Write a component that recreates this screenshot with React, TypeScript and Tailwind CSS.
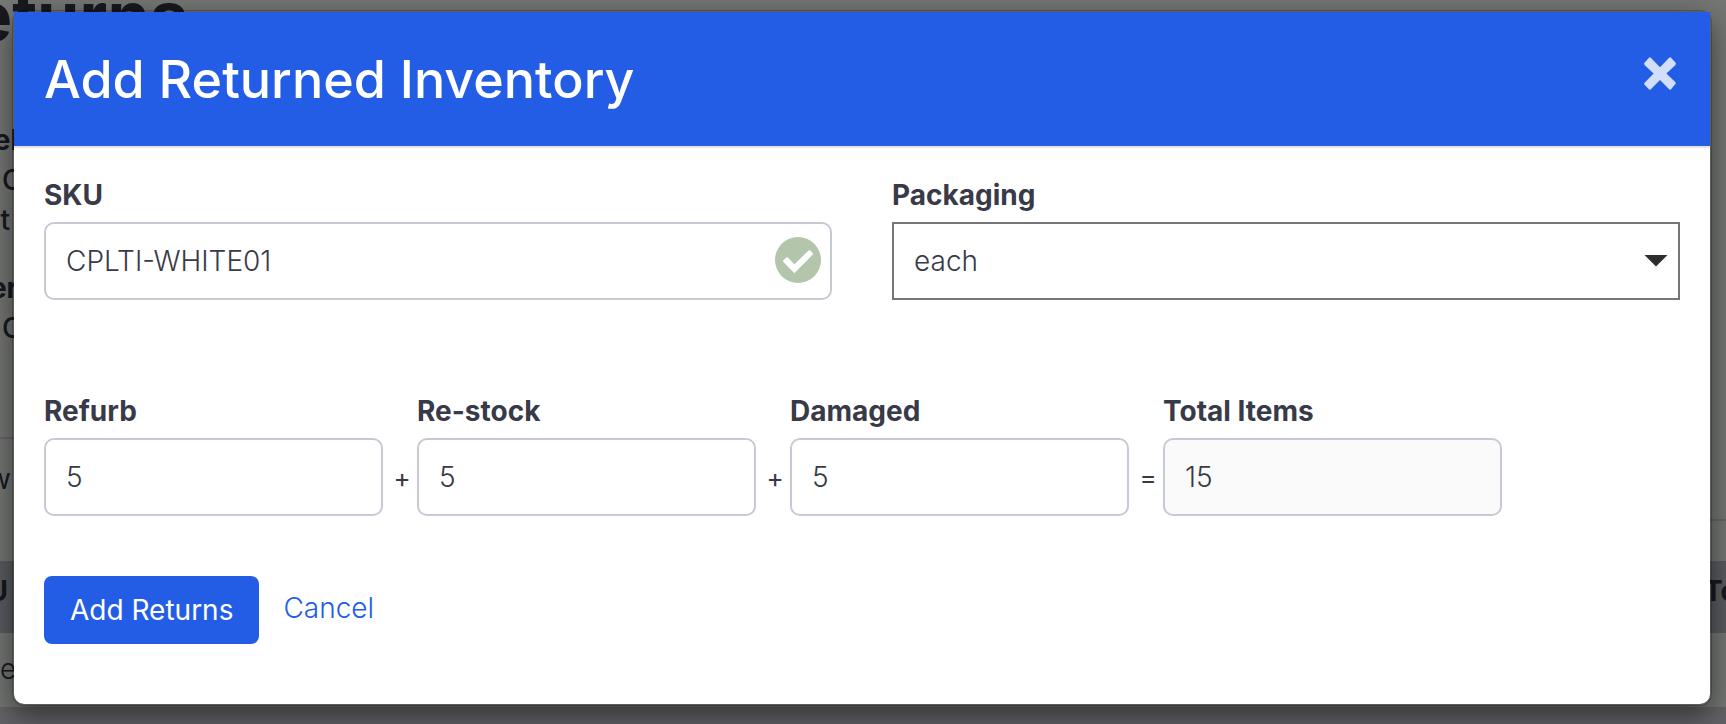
import { useState } from "react";

const fieldClass =
  "h-[78px] w-full rounded-[10px] border-2 border-[#c6cad2] px-5 text-[28px] font-light text-[#383a48] outline-none focus:border-[#235de6]";
const labelClass = "mb-2.5 block text-[28px] leading-[34px] font-bold";

function CheckIcon() {
  return (
    <svg viewBox="0 0 46 46" className="h-[46px] w-[46px]" aria-hidden="true">
      <circle cx="23" cy="23" r="23" fill="#b3c5ab" />
      <path
        d="M8.4 23.2 L11.2 20.5 Q12 19.9 12.8 20.6 L19.4 27.3 L33.6 13.5 Q34.5 12.8 35.3 13.6 L37.6 16 Q38.3 16.9 37.6 17.7 L19.4 36.2 L8.4 25 Q7.6 24.1 8.4 23.2 Z"
        fill="#fff"
      />
    </svg>
  );
}

function CloseIcon() {
  return (
    <svg viewBox="0 0 32 33" className="h-[33px] w-8" aria-hidden="true">
      <path
        d="M5.2 0.6 Q6 0 6.8 0.7 L16 10.2 L25.2 0.7 Q26 0 26.8 0.6 L31.2 5.2 Q31.9 6 31.9 7 Q31.9 7.6 31.2 8.2 L22.4 16.5 L31.2 25 Q31.9 25.7 31.8 26.6 L26.8 32.4 Q26 33 25.2 32.3 L16 23 L6.8 32.3 Q6 33 5.2 32.4 L0.6 27.8 Q0 27 0.1 26.3 L9.6 16.5 L0.8 8.2 Q0 7.4 0.1 6.2 Z"
        fill="#d3dffa"
      />
    </svg>
  );
}

function Operator({ children }: { children: string }) {
  return <span className="flex h-[78px] items-center justify-center self-end pl-1 text-[26px]">{children}</span>;
}

// Returns page underneath the dialog, dimmed by the backdrop
function ReturnsPage() {
  return (
    <div
      className="absolute inset-0 flex flex-col overflow-hidden bg-[#ebeeeb] text-[28px] leading-[40px] text-[#30323f]"
      aria-hidden="true"
    >
      <div className="-mt-6 flex h-20 w-[188px] shrink-0 justify-end text-[68px] leading-[80px] font-bold">Returns</div>
      <div className="mt-16 flex w-[18px] justify-end font-bold">Label</div>
      <div className="pl-0.5 font-medium">C</div>
      <div className="flex w-[10px] justify-end font-medium">Cost</div>
      <div className="mt-7 flex w-[18px] justify-end font-bold">Order</div>
      <div className="pl-0.5 font-medium">C</div>
      <div className="mt-[89px] flex h-[84px] shrink-0">
        <div className="flex-1 border-t-2 border-[#ccc] pt-5">
          <div className="flex w-[11px] justify-end">Show</div>
        </div>
        <div className="flex-1 border-b-2 border-[#ccc]" />
      </div>
      <div className="mt-10 flex h-[72px] shrink-0 justify-between bg-[#b7b9c2] pt-2.5 font-bold">
        <div className="flex w-2 justify-end">SKU</div>
        <div className="w-[22px]">Total</div>
      </div>
      <div className="h-[74px] shrink-0 pt-4 font-light">e</div>
      <div className="flex-1 bg-[#c6c7d0]" />
    </div>
  );
}

export default function App() {
  const [sku, setSku] = useState("CPLTI-WHITE01");
  const [refurb, setRefurb] = useState("5");
  const [restock, setRestock] = useState("5");
  const [damaged, setDamaged] = useState("5");

  const total = Number(refurb) + Number(restock) + Number(damaged);

  return (
    <div className="relative min-h-screen overflow-hidden pt-[10px] pr-[14px] pb-[18px] pl-3 font-['Inter',sans-serif] text-[#383a48]">
      <ReturnsPage />
      <div className="absolute inset-0 bg-black/50" />

      <div
        role="dialog"
        aria-labelledby="dialog-title"
        className="relative rounded-xl border-2 border-black/20 bg-white bg-clip-padding shadow-[0_10px_30px_rgba(0,0,0,0.5)]"
      >
        <header className="flex h-[136px] items-center justify-between border-b-2 border-[#e5e5e5] bg-[#235de6] px-[30px]">
          <h1 id="dialog-title" className="pt-0.5 text-[52px] leading-[64px] font-medium text-white">
            Add Returned Inventory
          </h1>
          <button type="button" aria-label="Close" className="mr-1 mb-3">
            <CloseIcon />
          </button>
        </header>

        <form className="px-[30px] pt-[30px] pb-[60px]" onSubmit={(e) => e.preventDefault()}>
          <div className="grid grid-cols-2 gap-[60px]">
            <div>
              <label htmlFor="sku" className={labelClass}>SKU</label>
              <div className="relative">
                <input id="sku" value={sku} onChange={(e) => setSku(e.target.value)} className={`${fieldClass} pr-16`} />
                <span className="pointer-events-none absolute inset-y-0 right-0 flex items-center pr-[11px] pb-0.5">
                  <CheckIcon />
                </span>
              </div>
            </div>
            <div>
              <label htmlFor="packaging" className={labelClass}>Packaging</label>
              <div className="relative">
                <select
                  id="packaging"
                  className="h-[78px] w-full appearance-none border-2 border-[#767676] bg-white px-5 text-[28px] font-light text-[#383a48] outline-none"
                >
                  <option>each</option>
                  <option>case</option>
                </select>
                <span className="pointer-events-none absolute inset-y-0 right-0 flex items-center pr-3">
                  <svg viewBox="0 0 24 12" className="h-3 w-6" aria-hidden="true">
                    <path d="M0.5 0 H23.5 L12 11.5 Z" fill="#2d2d2d" />
                  </svg>
                </span>
              </div>
            </div>
          </div>

          <div className="mt-[94px] mr-[178px] grid grid-cols-[1fr_34px_1fr_34px_1fr_34px_1fr]">
            <div>
              <label htmlFor="refurb" className={labelClass}>Refurb</label>
              <input id="refurb" value={refurb} onChange={(e) => setRefurb(e.target.value)} className={fieldClass} />
            </div>
            <Operator>+</Operator>
            <div>
              <label htmlFor="restock" className={labelClass}>Re-stock</label>
              <input id="restock" value={restock} onChange={(e) => setRestock(e.target.value)} className={fieldClass} />
            </div>
            <Operator>+</Operator>
            <div>
              <label htmlFor="damaged" className={labelClass}>Damaged</label>
              <input id="damaged" value={damaged} onChange={(e) => setDamaged(e.target.value)} className={fieldClass} />
            </div>
            <Operator>=</Operator>
            <div>
              <label htmlFor="total" className={labelClass}>Total Items</label>
              <input id="total" value={total} readOnly className={`${fieldClass} bg-[#fafafa]`} />
            </div>
          </div>

          <div className="mt-[60px] flex items-center gap-6">
            <button type="submit" className="h-[68px] rounded-lg bg-[#235de6] px-[26px] text-[28px] font-normal text-white">
              Add Returns
            </button>
            <a href="#" className="pb-1 text-[28px] font-light text-[#235de6]">Cancel</a>
          </div>
        </form>
      </div>
    </div>
  );
}
